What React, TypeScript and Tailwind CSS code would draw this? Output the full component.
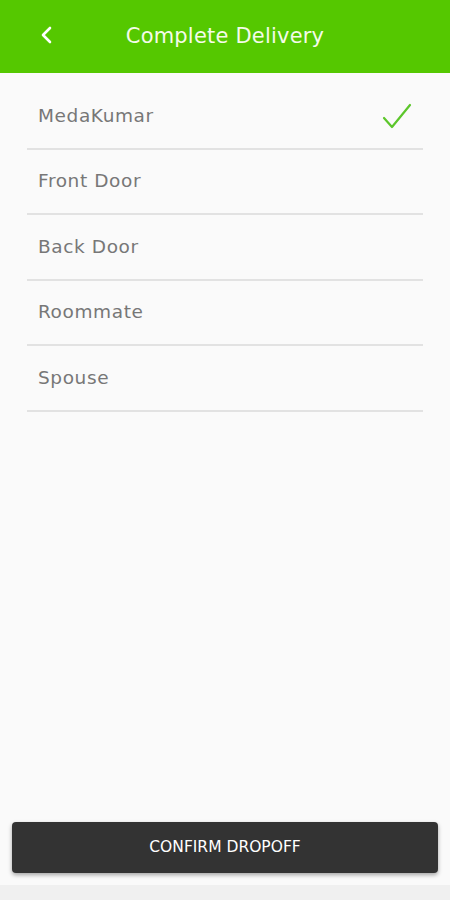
import { useState } from 'react';

const options = ['MedaKumar', 'Front Door', 'Back Door', 'Roommate', 'Spouse'];

export default function App() {
  const [selected, setSelected] = useState(0);

  return (
    <div
      className="flex h-[900px] w-[450px] flex-col bg-[#fafafa]"
      style={{ fontFamily: '"DejaVu Sans", "Open Sans", sans-serif' }}
    >
      <div className="relative flex h-[73px] items-center justify-center bg-[#55c800]">
        <button type="button" className="absolute left-[38px] top-[24px] text-white">
          <svg width="18" height="22" viewBox="0 0 18 22" fill="none">
            <path d="M12 4 L5 11 L12 18" stroke="white" strokeWidth="2.6" strokeLinecap="round" strokeLinejoin="round" />
          </svg>
        </button>
        <div className="text-[21px] font-normal tracking-[0.2px] text-[#f4fbe9]">Complete Delivery</div>
      </div>

      <div className="mx-[27px] pt-[11px]">
        {options.map((o, i) => (
          <button
            key={o}
            type="button"
            onClick={() => setSelected(i)}
            className="flex h-[65.5px] w-full items-center justify-between border-b-2 border-[#e2e2e2] pl-[11px] pr-[10px] text-left"
          >
            <span className="text-[18.5px] tracking-[0.6px] text-[#777777]">{o}</span>
            {selected === i && (
              <svg width="32" height="30" viewBox="0 0 32 30" fill="none">
                <path d="M3 17 L11 26 L29 4" stroke="#5cc62b" strokeWidth="2.2" strokeLinecap="round" strokeLinejoin="round" />
              </svg>
            )}
          </button>
        ))}
      </div>

      <div className="flex-1" />

      <div className="px-[12px] pb-[12px]">
        <button
          type="button"
          className="flex h-[51px] w-full items-center justify-center rounded-[4px] bg-[#333333] text-[15.5px] font-normal tracking-[0px] text-white shadow-[0_2px_4px_rgba(0,0,0,0.35)]"
        >
          CONFIRM DROPOFF
        </button>
      </div>
      <div className="h-[15px] bg-[#f0f0f0]" />
    </div>
  );
}
